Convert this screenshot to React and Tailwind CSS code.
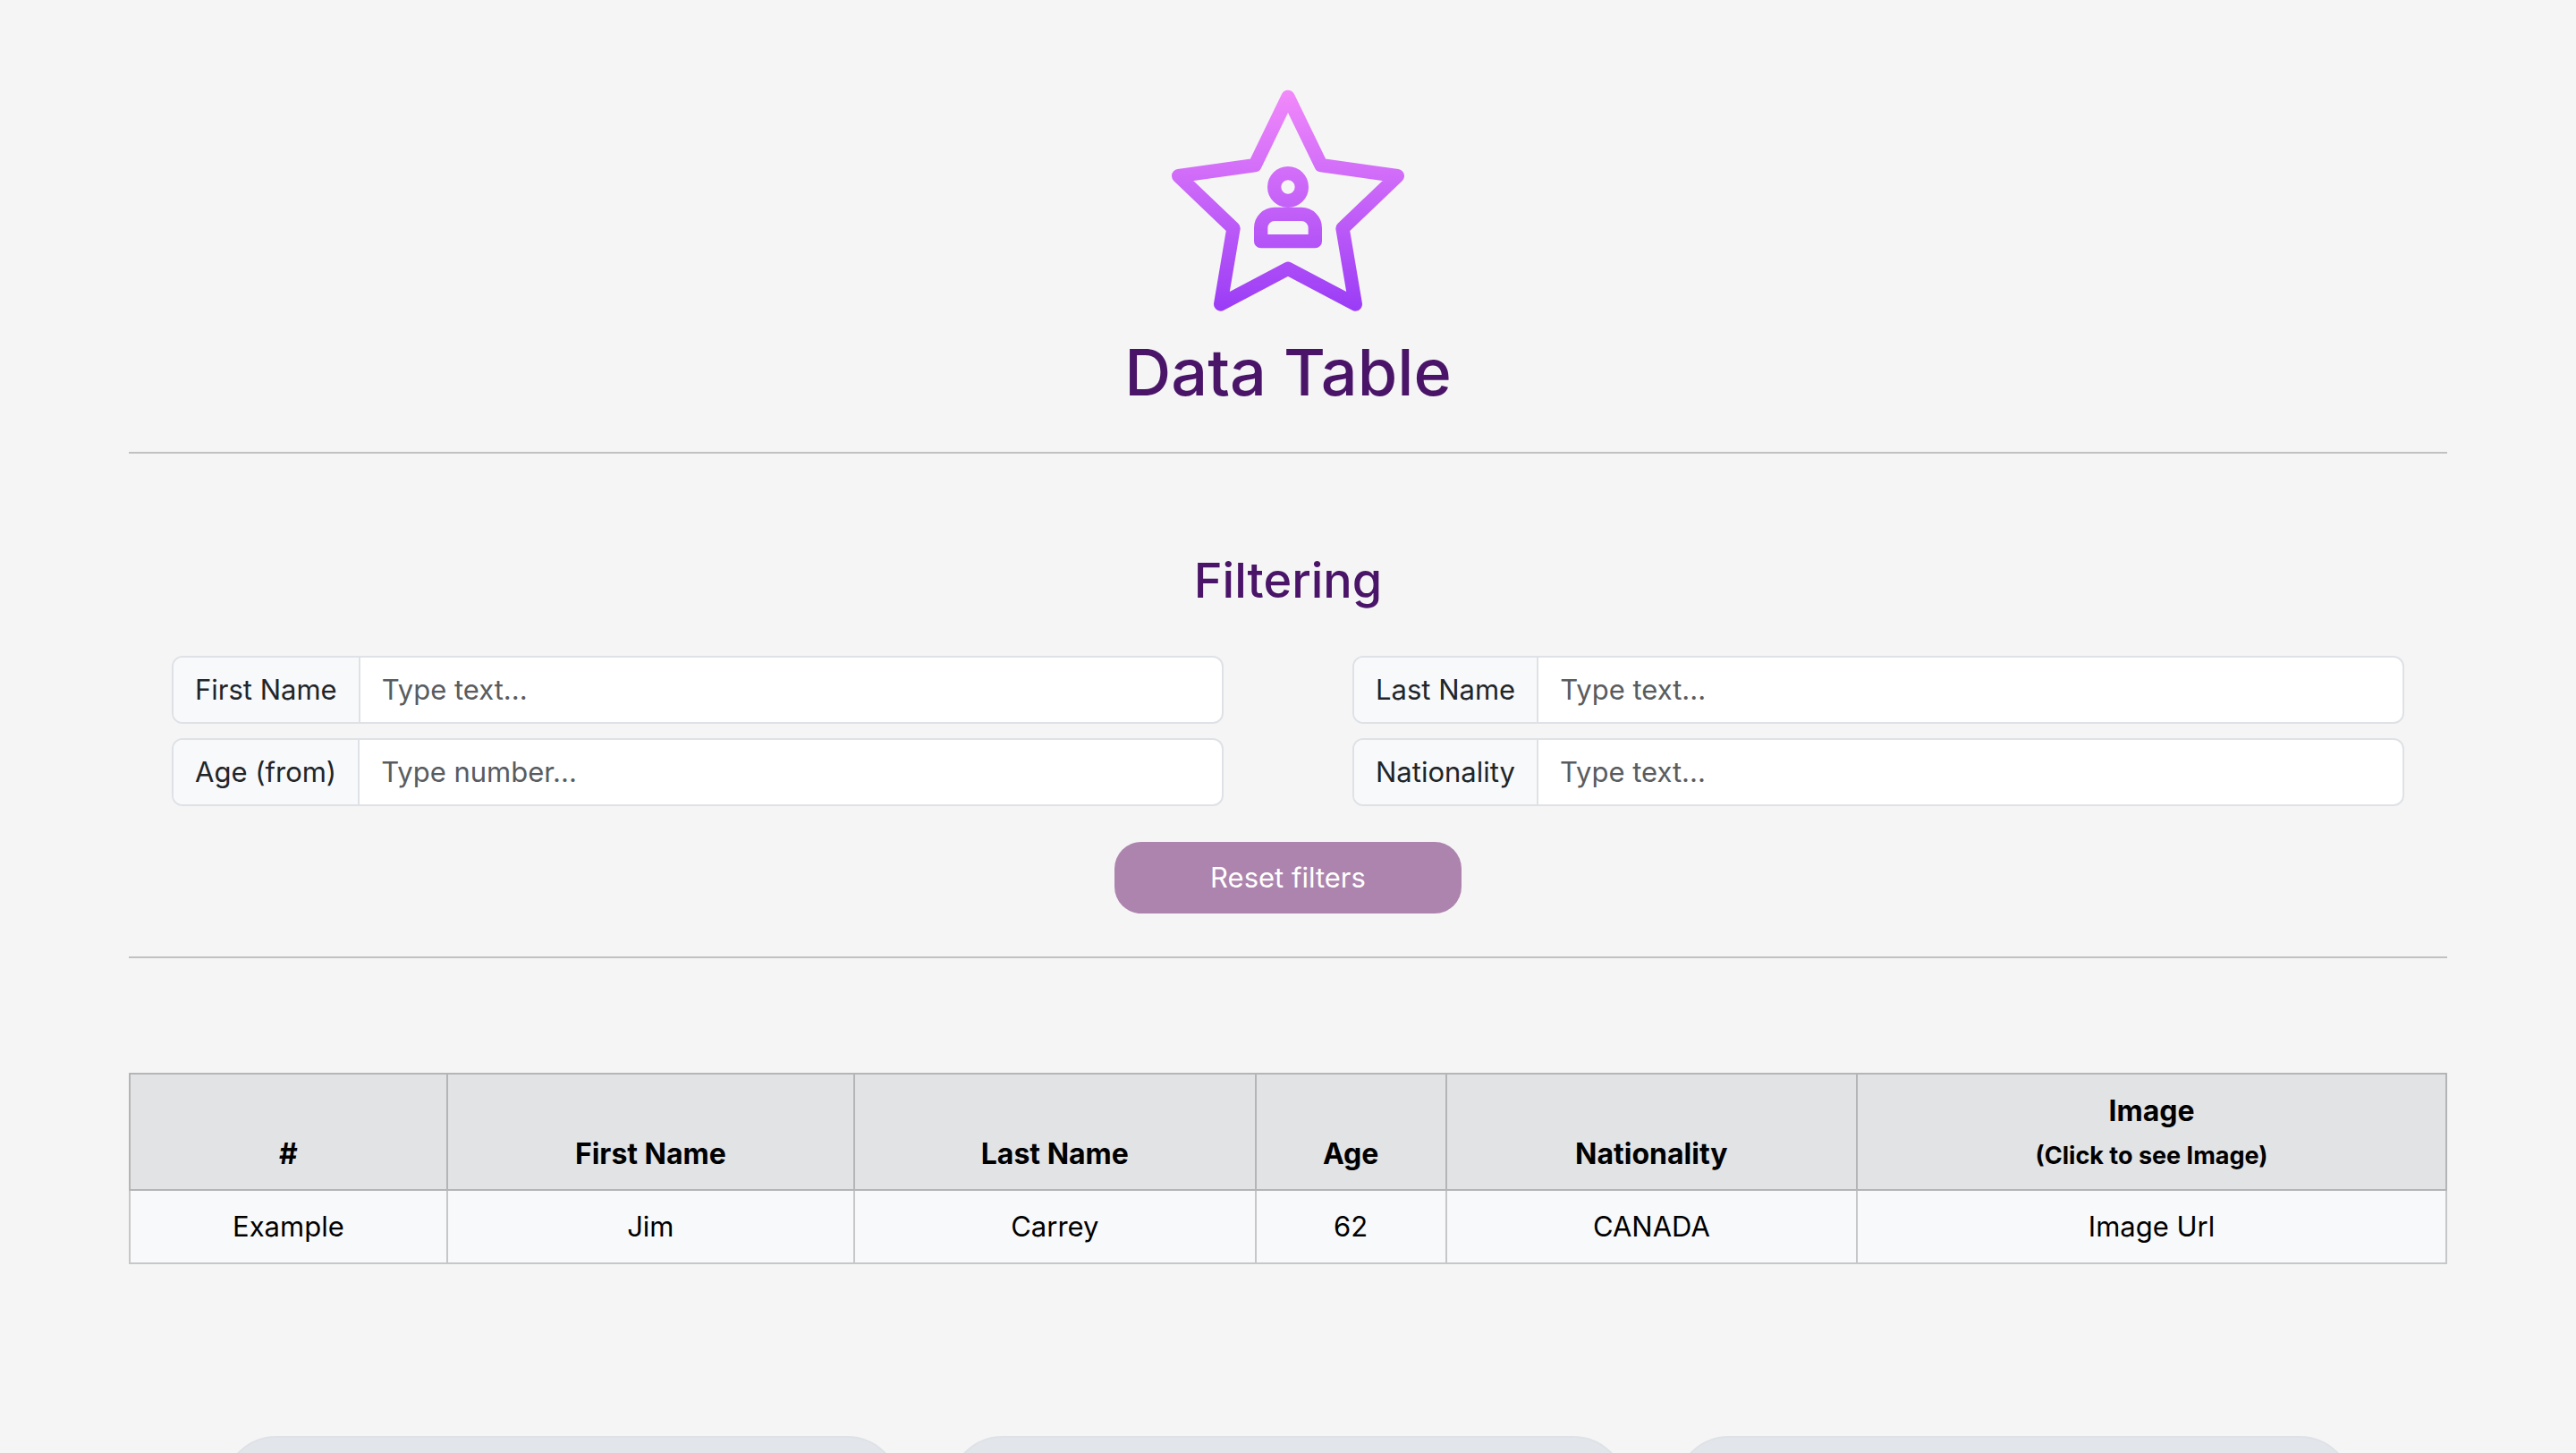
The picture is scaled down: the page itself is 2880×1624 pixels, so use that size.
const FIELDS = [
  { id: "firstName", label: "First Name", type: "text", placeholder: "Type text..." },
  { id: "lastName", label: "Last Name", type: "text", placeholder: "Type text..." },
  { id: "age", label: "Age (from)", type: "number", placeholder: "Type number..." },
  { id: "nationality", label: "Nationality", type: "text", placeholder: "Type text..." },
];

const HEAD = "border-2 border-[#b4b5b7] px-4 pt-[17px] pb-[15px] align-bottom text-[32px] font-bold";
const CELL = "border-2 border-[#c6c7c8] p-4";
const CARD = "h-96 w-[758px] shrink-0 rounded-[60px] border-2 border-[#dee2e6] bg-[#e2e6eb]";

function StarLogo() {
  return (
    <svg viewBox="210 58 780 744" className="h-[248px] w-[260px]" fill="none" aria-hidden="true">
      <defs>
        <linearGradient id="star" gradientUnits="userSpaceOnUse" x1="0" y1="60" x2="0" y2="800">
          <stop offset="0" stopColor="#f28afa" />
          <stop offset="1" stopColor="#9a3cf6" />
        </linearGradient>
      </defs>
      <g stroke="url(#star)" strokeWidth="46" strokeLinejoin="round">
        <path d="M600 83 711 312 967 348 783 524 826 778 600 659 374 778 417 524 233 348 489 312Z" />
        <circle cx="600" cy="385" r="46" />
        <path d="M509 567V522a46 46 0 0 1 46-46h90a46 46 0 0 1 46 46v45Z" />
      </g>
    </svg>
  );
}

function Field({ id, label, type, placeholder }) {
  return (
    <div className="flex h-[76px] overflow-hidden rounded-xl border-2 border-[#dee2e6] bg-white">
      <label
        htmlFor={id}
        className="flex items-center border-r-2 border-[#dee2e6] bg-[#f8f9fa] px-6 whitespace-nowrap text-[#212529]"
      >
        {label}
      </label>
      <input
        id={id}
        type={type}
        placeholder={placeholder}
        className="min-w-0 flex-1 px-6 outline-none placeholder:text-[#595c5f]"
      />
    </div>
  );
}

export default function App() {
  return (
    <div className="h-screen overflow-hidden bg-[#f5f5f5] px-[5%] font-['Inter',sans-serif] text-[31px] leading-[48px] text-black">
      <header className="flex flex-col items-center border-b-2 border-[#c1c1c1] pt-[100px] pb-[41px]">
        <StarLogo />
        <h1 className="mt-5 text-[72px] leading-[96px] font-medium text-[#4a1468]">Data Table</h1>
      </header>

      <main>
        <form className="border-b-2 border-[#c1c1c1] px-12 pt-[106px] pb-12">
          <h2 className="text-center text-[54px] leading-[72px] font-medium text-[#4a1468]">Filtering</h2>
          <div className="mt-12 grid grid-cols-2 gap-x-36 gap-y-4">
            {FIELDS.map((f) => (
              <Field key={f.id} {...f} />
            ))}
          </div>
          <button
            type="reset"
            className="mx-auto mt-10 block h-20 w-[388px] rounded-[30px] bg-[#ad84ad] text-white"
          >
            Reset filters
          </button>
        </form>

        <table className="mt-32 w-full table-fixed border-collapse text-center">
          <colgroup>
            <col className="w-[13.7%]" />
            <col className="w-[17.57%]" />
            <col className="w-[17.33%]" />
            <col className="w-[8.22%]" />
            <col className="w-[17.74%]" />
            <col />
          </colgroup>
          <thead className="bg-[#e2e3e5]">
            <tr>
              <th className={HEAD}>#</th>
              <th className={HEAD}>First Name</th>
              <th className={HEAD}>Last Name</th>
              <th className={HEAD}>Age</th>
              <th className={HEAD}>Nationality</th>
              <th className={HEAD}>
                Image
                <br />
                <span className="text-[27px] leading-none">(Click to see Image)</span>
              </th>
            </tr>
          </thead>
          <tbody className="bg-[#f8f9fa]">
            <tr>
              <td className={CELL}>Example</td>
              <td className={CELL}>Jim</td>
              <td className={CELL}>Carrey</td>
              <td className={CELL}>62</td>
              <td className={CELL}>CANADA</td>
              <td className={CELL}>Image Url</td>
            </tr>
          </tbody>
        </table>

        <div className="mt-48 flex justify-center gap-[54px]">
          <div className={CARD} />
          <div className={CARD} />
          <div className={CARD} />
        </div>
      </main>
    </div>
  );
}
